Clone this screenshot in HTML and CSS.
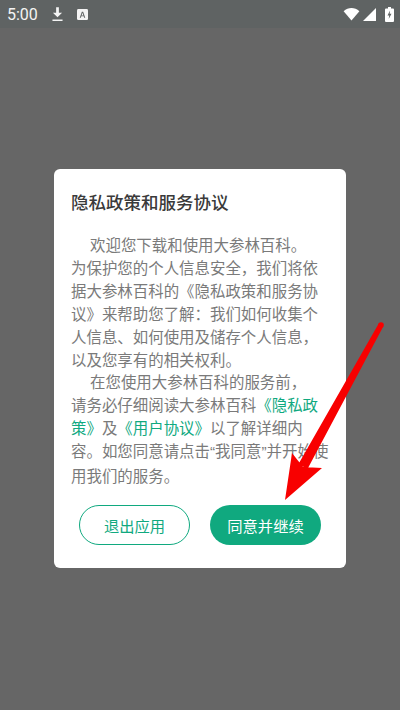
FILE: index.html
```html
<!DOCTYPE html>
<html lang="zh">
<head>
<meta charset="utf-8">
<title>隐私政策和服务协议</title>
<link rel="stylesheet" href="styles.css">
</head>
<body>
<div class="screen">
  <header class="status">
    <span class="time">5:00</span>
    <svg class="ic-dl" viewBox="0 0 12 16"><path d="M4.500 0h3v6H11L6 11 1 6h3.500zM0.500 13.500h11v1.500H0.500z" fill="#f4f4f4"/></svg>
    <svg class="ic-a" viewBox="0 0 12 12"><rect width="12" height="12" rx="1.500" fill="#f4f4f4"/><path d="M3 9.500 5.300 3h1.400L9 9.500H7.800L7.300 8H4.700L4.200 9.500zM5 7h2L6 4.200z" fill="#5f6363"/></svg>
    <span class="spacer"></span>
    <svg class="ic-wifi" viewBox="0 0 18 14"><path d="M0.500 3.500C5.500-1 12.500-1 17.500 3.500L9 13.500z" fill="#fff"/></svg>
    <svg class="ic-signal" viewBox="0 0 13 13"><path d="M13 0V13H0z" fill="#fff"/></svg>
    <svg class="ic-batt" viewBox="0 0 9 15"><path d="M3 0h3v1.500h2a1 1 0 0 1 1 1V14a1 1 0 0 1-1 1H1a1 1 0 0 1-1-1V2.500a1 1 0 0 1 1-1h2z" fill="#fff"/><path d="M5 3.500 2.500 8.500h1.700L3.700 12 6.500 6.800H4.700z" fill="#5f6363"/></svg>
  </header>
  <main class="stage">
    <section class="dialog">
      <h1 class="title">隐私政策和服务协议</h1>
      <div class="body">
        <p class="para"><span class="indent">欢迎您下载和使用大参林百科。</span><br>为保护您的个人信息安全，我们将依<br>据大参林百科的《隐私政策和服务协<br>议》来帮助您了解：我们如何收集个<br>人信息、如何使用及储存个人信息，<br>以及您享有的相关权利。</p>
        <p class="para"><span class="indent">在您使用大参林百科的服务前，</span><br>请务必仔细阅读大参林百科<a class="link">《隐私政<br>策》</a>及<a class="link">《用户协议》</a>以了解详细内<br>容。如您同意请点击<span class="quote">“</span>我同意<span class="quote">”</span>并开始使<br>用我们的服务。</p>
      </div>
      <div class="actions">
        <button class="btn btn-outline">退出应用</button>
        <button class="btn btn-solid">同意并继续</button>
      </div>
    </section>
  </main>
  <svg class="arrow" viewBox="0 0 400 710"><circle cx="381" cy="325" r="2.800" fill="#f80000"/><path d="M378.600 323.700 383.400 326.300 307.500 469 298.500 464zM285 500 292 453 303 467 322 468z" fill="#f80000"/></svg>
</div>
</body>
</html>
```
FILE: styles.css
```css
* { box-sizing: border-box; }
html, body { margin: 0; padding: 0; }
body { width: 400px; height: 710px; overflow: hidden; font-family: "Noto Sans CJK SC", "Noto Sans", sans-serif; }
.screen { position: relative; width: 400px; height: 710px; background: #666666; display: flex; flex-direction: column; }
.status { height: 28px; flex: none; background: #5f6363; display: flex; align-items: center; padding: 0 6px 0 7px; color: #f4f4f4; }
.time { font-family: Roboto, sans-serif; font-size: 16px; width: 45px; }
.ic-dl { width: 11px; height: 15px; margin-left: 0; }
.ic-a { width: 11px; height: 11px; margin-left: 14px; }
.spacer { flex: 1; }
.ic-wifi { width: 17px; height: 13px; }
.ic-signal { width: 13px; height: 13px; margin-left: 3px; }
.ic-batt { width: 9px; height: 15px; margin-left: 9px; }
.stage { flex: 1; display: flex; justify-content: center; align-items: flex-start; padding-top: 141px; }
.dialog { width: 292px; height: 399px; background: #fff; border-radius: 6px; padding: 20px 17px 0; display: flex; flex-direction: column; }
.title { margin: 0; font-size: 17.500px; line-height: 26px; font-weight: 500; color: #3a3a3a; }
.body { margin-top: 18px; font-size: 15.450px; line-height: 22.900px; color: #7a7a7a; white-space: nowrap; }
.para { margin: 0; }
.indent { margin-left: 19px; }
.quote { font-family: "Liberation Sans", sans-serif; }
.link { color: #10a97f; }
.actions { margin-top: 18px; display: flex; justify-content: space-between; padding: 0 8px; }
.btn { width: 111px; height: 40px; border-radius: 20px; font: inherit; font-size: 15.300px; padding: 0; }
.btn-outline { background: #fff; border: 1px solid #10a97f; color: #10a97f; }
.btn-solid { background: #10a97f; border: none; color: #fff; }
.arrow { position: absolute; left: 0; top: 0; width: 400px; height: 710px; pointer-events: none; }
```
